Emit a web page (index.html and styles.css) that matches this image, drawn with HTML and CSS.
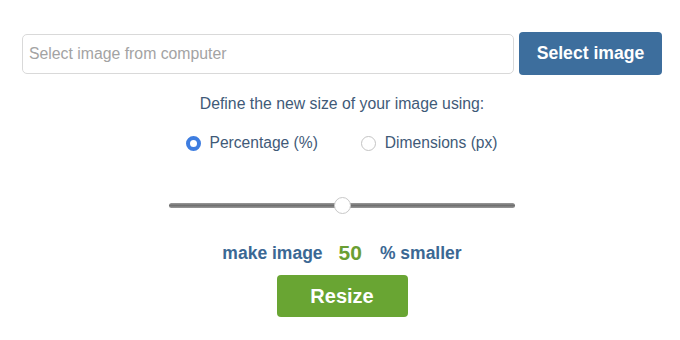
FILE: index.html
```html
<!DOCTYPE html>
<html>
<head>
	<meta charset="utf-8">
	<link rel="stylesheet" href="styles.css">
</head>
<body>
	<div class="resizer">
		<div class="picker">
			<input class="file_input" type="text" placeholder="Select image from computer">
			<button class="btn btn_select">Select image</button>
		</div>
		<div class="hint">Define the new size of your image using:</div>
		<div class="modes">
			<label class="mode"><input type="radio" name="mode" checked> Percentage (%)</label>
			<label class="mode"><input type="radio" name="mode"> Dimensions (px)</label>
		</div>
		<div class="slider_row">
			<input class="slider" type="range" min="1" max="99" value="50">
		</div>
		<div class="amount">
			<span>make image</span>
			<span class="percent">50</span>
			<span>% smaller</span>
		</div>
		<button class="btn btn_resize">Resize</button>
	</div>
</body>
</html>
```

FILE: styles.css
```css
body {
	margin: 0;
	background: #fff;
	font-family: "Liberation Sans", Arial, sans-serif;
}
.resizer {
	width: 640px;
	margin-left: 22px;
	padding-top: 32px;
	display: flex;
	flex-direction: column;
	align-items: center;
}
.picker {
	display: flex;
	align-items: center;
	gap: 5px;
	width: 100%;
}
.file_input {
	box-sizing: border-box;
	width: 492px;
	height: 40px;
	border: 1px solid #d9d9d9;
	border-radius: 5px;
	padding: 0 6px;
	font: 15.8px "Liberation Sans", Arial, sans-serif;
	outline: none;
}
.file_input::placeholder {
	color: #a3a3a3;
}
.btn {
	border: none;
	border-radius: 4px;
	color: #fff;
	font: bold 17.6px "Liberation Sans", Arial, sans-serif;
	cursor: pointer;
}
.btn_select {
	width: 143px;
	height: 43px;
	background: #3d6e9d;
}
.hint {
	margin-top: 20px;
	font-size: 15.8px;
	color: #3f5a78;
}
.modes {
	display: flex;
	gap: 43px;
	margin-top: 21px;
	margin-left: -1px;
}
.mode {
	display: flex;
	align-items: center;
	gap: 9px;
	font-size: 15.6px;
	color: #3f5a78;
}
.mode input {
	appearance: none;
	margin: 0;
	width: 15px;
	height: 15px;
	border-radius: 50%;
	border: 1px solid #c4c4c4;
	background: #fff;
}
.mode input:checked {
	border: 4.5px solid #3e7de0;
}
.slider_row {
	margin-top: 43px;
	height: 20px;
	display: flex;
	align-items: center;
}
.slider {
	appearance: none;
	margin: 0;
	width: 346px;
	height: 5px;
	border-radius: 3px;
	background: linear-gradient(#9a9a9a, #707070 50%, #9a9a9a);
	outline: none;
}
.slider::-webkit-slider-thumb {
	appearance: none;
	width: 17px;
	height: 17px;
	border-radius: 50%;
	background: #fff;
	border: 1px solid #c8c8c8;
}
.amount {
	display: flex;
	align-items: center;
	gap: 16px;
	margin-top: 26px;
	font-weight: bold;
	font-size: 17.5px;
	color: #3b6894;
}
.percent {
	font-size: 21px;
	color: #6a9e33;
	margin-right: 2px;
}
.btn_resize {
	margin-top: 10px;
	width: 131px;
	height: 42px;
	background: #69a533;
	font-size: 20px;
}
```
